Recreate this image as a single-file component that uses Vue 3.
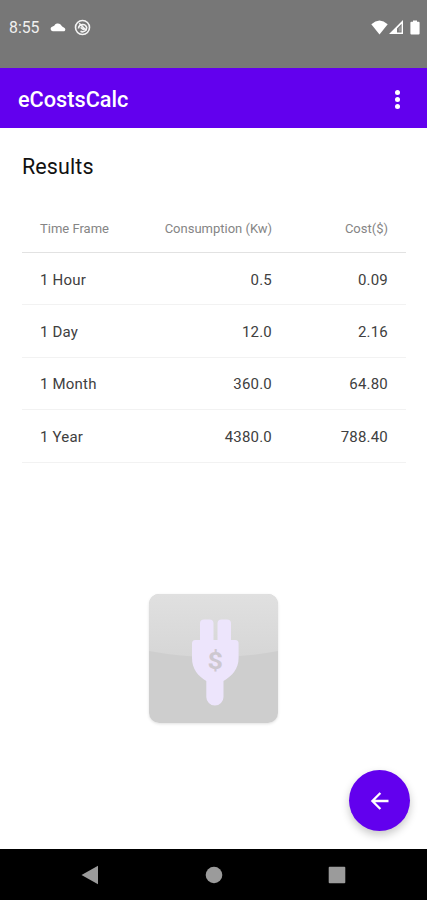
<template>
  <div class="screen">
    <header class="status">
      <span class="time">8:55</span>
      <svg class="cloud" width="16" height="10" viewBox="0 0 16 10">
        <path d="M2.8 9.3A2.4 2.4 0 0 1 1.6 5L4.2 3.8A4 4 0 0 1 10.3 2.3L12.2 4.5L14.6 6A2 2 0 0 1 14.2 9.3Z" />
      </svg>
      <svg class="sync" width="17" height="17" viewBox="0 0 17 17">
        <circle cx="8.5" cy="8.5" r="7" />
        <path d="M4.5 9.5A4.2 4.2 0 0 1 12.7 8.5A4.2 4.2 0 0 1 6.5 12.3M5.2 4.2L12.5 11.7M6.6 8.3L9.8 11" />
      </svg>
      <div class="signals">
        <svg width="17" height="15" viewBox="0 0 17 15">
          <path d="M0.3 4.2Q8.5 -3.2 16.7 4.2L8.5 14.4Z" />
        </svg>
        <svg width="14" height="14" viewBox="0 0 14 14">
          <path fill-rule="evenodd" d="M14 0V14H0ZM12.6 3.8L8 8.5V12.4H12.6Z" />
          <path d="M9.8 8.2L11.8 6V11.6H9.8Z" fill-opacity="0.25" />
        </svg>
        <svg class="battery" width="10" height="15" viewBox="0 0 10 15">
          <path d="M3 0.4H7V1.7H8.6Q9.6 1.7 9.6 2.7V13.4Q9.6 14.4 8.6 14.4H1.4Q0.4 14.4 0.4 13.4V2.7Q0.4 1.7 1.4 1.7H3Z" />
        </svg>
      </div>
    </header>

    <div class="appbar">
      <h1>eCostsCalc</h1>
      <button class="more" aria-label="More options">
        <i></i><i></i><i></i>
      </button>
    </div>

    <main>
      <h2>Results</h2>
      <table>
        <thead>
          <tr>
            <th>Time Frame</th>
            <th class="num kw">Consumption (Kw)</th>
            <th class="num cost">Cost($)</th>
          </tr>
        </thead>
        <tbody>
          <tr v-for="row in rows" :key="row.frame">
            <td>{{ row.frame }}</td>
            <td class="num">{{ row.kw }}</td>
            <td class="num">{{ row.cost }}</td>
          </tr>
        </tbody>
      </table>

      <div class="logo">
        <svg width="129" height="129" viewBox="0 0 129 129">
          <defs>
            <linearGradient id="gloss" x1="0" y1="0" x2="0" y2="1">
              <stop offset="0" stop-color="#e0e0e0" />
              <stop offset="1" stop-color="#d6d6d6" />
            </linearGradient>
          </defs>
          <rect width="129" height="129" fill="#cecece" />
          <path d="M0 0H129V57Q64.5 69 0 57Z" fill="url(#gloss)" />
          <g fill="#ede5fc">
            <rect x="51" y="25.5" width="13.5" height="28" rx="4" />
            <rect x="68.5" y="25.5" width="13.5" height="28" rx="4" />
            <path d="M46.3 46H86.3Q89.6 46 89.6 49.5V64C89.6 75 83 82 74.5 87V103A8.6 8.6 0 0 1 57.3 103V87C49 82 43 75 43 64V49.5Q43 46 46.3 46Z" />
          </g>
          <text transform="translate(66.3 74.8) scale(1 0.9)" text-anchor="middle">$</text>
        </svg>
      </div>

      <button class="fab" aria-label="Back">
        <svg width="20" height="20" viewBox="0 0 20 20">
          <path d="M18.5 10H3M10.4 2L2.4 10L10.4 18" />
        </svg>
      </button>
    </main>

    <nav>
      <svg width="18" height="20" viewBox="0 0 18 20"><path d="M0.5 10L17 0.8V19.2Z" /></svg>
      <svg width="18" height="20" viewBox="0 0 18 20"><circle cx="9" cy="10" r="8.3" /></svg>
      <svg width="18" height="20" viewBox="0 0 18 20"><rect x="0.7" y="1.7" width="16.6" height="16.6" rx="1" /></svg>
    </nav>
  </div>
</template>

<script setup>
const rows = [
  { frame: "1 Hour", kw: "0.5", cost: "0.09" },
  { frame: "1 Day", kw: "12.0", cost: "2.16" },
  { frame: "1 Month", kw: "360.0", cost: "64.80" },
  { frame: "1 Year", kw: "4380.0", cost: "788.40" },
];
</script>

<style>
body {
  margin: 0;
}
</style>

<style scoped>
.screen {
  display: flex;
  flex-direction: column;
  width: 427px;
  height: 900px;
  overflow: hidden;
  background: #fff;
  font-family: Roboto, "Liberation Sans", sans-serif;
}

button {
  border: 0;
  padding: 0;
}

/* Status bar */
.status {
  box-sizing: border-box;
  display: flex;
  align-items: center;
  height: 68px;
  padding: 0 7px 14px 9px;
  background: #777;
  color: #f0f0f0;
}

.status svg {
  fill: #fff;
}

.time {
  width: 41px;
  font-size: 15.8px;
  line-height: 20px;
  padding-top: 2px;
}

.cloud {
  margin-right: 8px;
}

.status .sync {
  fill: none;
  stroke: #f4f4f4;
  stroke-width: 1.6;
}

.signals {
  display: flex;
  align-items: center;
  gap: 1px;
  margin-left: auto;
}

.battery {
  margin-left: 6px;
}

/* App bar */
.appbar {
  box-sizing: border-box;
  display: flex;
  align-items: center;
  justify-content: space-between;
  height: 60px;
  padding: 2px 27px 0 18px;
  background: #6200ee;
}

h1 {
  margin: 0;
  color: #fff;
  font-size: 21.7px;
  font-weight: 500;
}

.more {
  display: flex;
  flex-direction: column;
  gap: 2px;
  background: none;
}

.more i {
  width: 5px;
  height: 5px;
  border-radius: 50%;
  background: #fff;
}

/* Results */
main {
  flex: 1;
  position: relative;
  display: flex;
  flex-direction: column;
  padding: 25px 21px 0 22px;
}

h2 {
  margin: 0;
  font-size: 21.5px;
  font-weight: 400;
  line-height: 28px;
  letter-spacing: 0.1px;
  color: #111;
}

table {
  width: 384px;
  margin-top: 21px;
  border-collapse: separate;
  border-spacing: 0;
  table-layout: fixed;
}

th,
td {
  box-sizing: border-box;
  padding: 2px 18px 0;
  border-bottom: 1px solid #f2f2f2;
  text-align: left;
  white-space: nowrap;
}

th {
  height: 51px;
  border-bottom-color: #e2e2e2;
  font-size: 13px;
  font-weight: 400;
  color: #858585;
}

td {
  height: 52.4px;
  font-size: 15px;
  letter-spacing: 0.2px;
  color: #404040;
}

.num {
  text-align: right;
}

.kw {
  width: 144px;
}

.cost {
  width: 116px;
}

.logo {
  width: 129px;
  height: 129px;
  margin: 131px 0 0 127px;
  border-radius: 10px;
  overflow: hidden;
  box-shadow: 0 1px 3px rgba(0, 0, 0, 0.12);
}

.logo svg {
  display: block;
}

.logo text {
  font-size: 27px;
  font-weight: 700;
  fill: #cdc8d0;
}

.fab {
  position: absolute;
  right: 17px;
  bottom: 18px;
  display: grid;
  place-items: center;
  width: 61px;
  height: 61px;
  border-radius: 50%;
  background: #6200ee;
  box-shadow: 0 4px 8px rgba(0, 0, 0, 0.22);
}

.fab path {
  fill: none;
  stroke: #fff;
  stroke-width: 2.3;
}

/* System navigation */
nav {
  box-sizing: border-box;
  display: flex;
  align-items: center;
  justify-content: space-between;
  height: 51px;
  padding: 0 81px;
  background: #000;
}

nav svg {
  fill: #9b9b9b;
}
</style>
